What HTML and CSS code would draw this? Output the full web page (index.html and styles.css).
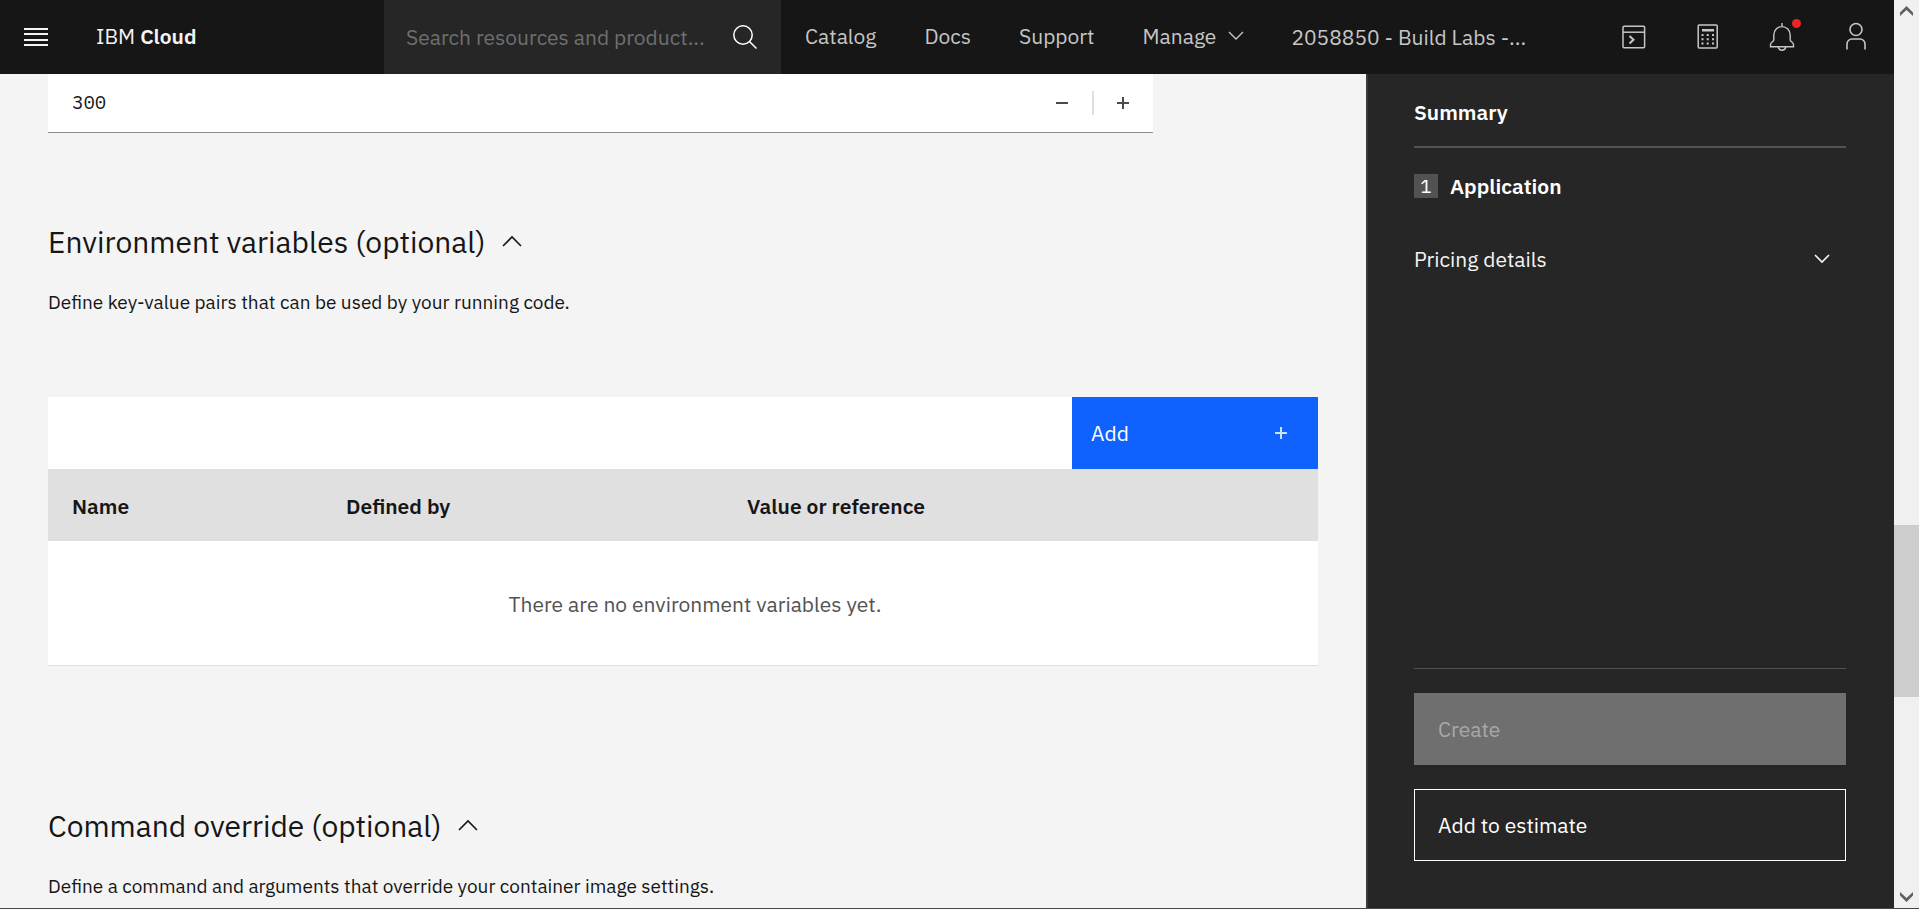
FILE: index.html
```html
<!DOCTYPE html>
<html lang="en">
<head>
<meta charset="utf-8">
<title>IBM Cloud</title>
<link rel="stylesheet" href="styles.css">
</head>
<body>
<div class="app">
  <header class="header">
    <div class="brand-area">
      <button class="menu-button" type="button" aria-label="Menu">
        <svg width="24" height="18" viewBox="0 0 24 18" fill="#f4f4f4" shape-rendering="crispEdges"><path d="M0 0h24v2H0zM0 5h24v2H0zM0 11h24v2H0zM0 16h24v2H0z"/></svg>
      </button>
      <a class="brand" href="#">IBM <b>Cloud</b></a>
    </div>
    <form class="search">
      <input class="search-input" type="text" aria-label="Search" placeholder="Search resources and product...">
      <button class="search-button" type="button" aria-label="Submit search">
        <svg width="24" height="24" viewBox="0 0 24 24" fill="none" stroke="#fff" stroke-width="1.5"><circle cx="10" cy="10" r="9.2"/><path d="M16.5 16.5 23.5 23.5"/></svg>
      </button>
    </form>
    <nav class="nav">
      <a href="#">Catalog</a>
      <a href="#">Docs</a>
      <a href="#">Support</a>
      <a class="manage" href="#">Manage
        <svg width="16" height="10" viewBox="0 0 16 10" fill="none" stroke="#c6c6c6" stroke-width="1.4"><path d="M1 1l7 7 7-7"/></svg>
      </a>
    </nav>
    <button class="account" type="button">2058850 - Build Labs -...</button>
    <div class="tools">
      <button type="button" aria-label="Shell">
        <svg width="30" height="30" viewBox="0 0 30 30" fill="none" stroke="#c6c6c6" stroke-width="1.5"><rect x="4" y="4.2" width="21.6" height="21.6" rx="1"/><path d="M4 10.2h21.6"/><path d="M10.5 14l4 3.7-4 3.7" stroke-width="2"/></svg>
      </button>
      <button type="button" aria-label="Cost estimator">
        <svg width="30" height="30" viewBox="0 0 30 30" fill="#c6c6c6"><rect x="5.2" y="3" width="19" height="23" rx="1" fill="none" stroke="#c6c6c6" stroke-width="1.5"/><path d="M9 7h12v2.4H9zM8.5 12h2v2h-2zM13.7 12h2v2h-2zM19 12h2v2h-2zM8.5 16.2h2v2h-2zM13.7 16.2h2v2h-2zM19 16.2h2v2h-2zM8.5 20.4h2v2h-2zM13.7 20.4h2v2h-2zM19 20.4h2v2h-2z"/></svg>
      </button>
      <button type="button" aria-label="Notifications">
        <svg width="30" height="30" viewBox="0 0 30 30" fill="none" stroke="#c6c6c6" stroke-width="1.4"><path d="M15 1v3.5M6.8 13a8.2 8.4 0 0 1 16.4 0v5c0 1.6 3.3 2.2 3.3 4.5v2.2h-23v-2.2C3.5 20.2 6.8 19.6 6.8 18z"/><path d="M11.2 25c.4 2 1.9 3.2 3.8 3.2s3.400-1.200 3.800-3.200"/><circle cx="29.500" cy="1.500" r="4.500" fill="#ee2328" stroke="none"/></svg>
      </button>
      <button type="button" aria-label="Profile">
        <svg width="30" height="30" viewBox="0 0 30 30" fill="none" stroke="#c6c6c6" stroke-width="1.6"><circle cx="15" cy="7.500" r="6"/><path d="M6 27.500V22a5 5 0 0 1 5-5h8a5 5 0 0 1 5 5v5.500"/></svg>
      </button>
    </div>
  </header>

  <main class="main">
    <div class="number-field">
      <input class="number-input" type="text" value="300" aria-label="Timeout (seconds)">
      <button type="button" aria-label="Decrease">
        <svg width="12" height="12" viewBox="0 0 12 12" fill="#4a4a4a"><path d="M0 5h12v2H0z"/></svg>
      </button>
      <span class="divider"></span>
      <button type="button" aria-label="Increase">
        <svg width="12" height="12" viewBox="0 0 12 12" fill="#4a4a4a"><path d="M0 5h12v2H0zM5 0h2v12H5z"/></svg>
      </button>
    </div>

    <section class="section">
      <h2><button class="section-toggle" type="button" aria-expanded="true">Environment variables (optional)
        <svg width="20" height="12" viewBox="0 0 20 12" fill="none" stroke="#161616" stroke-width="1.6"><path d="M1 10l9-9 9 9"/></svg>
      </button></h2>
      <p>Define key-value pairs that can be used by your running code.</p>
    </section>

    <div class="data">
      <div class="toolbar">
        <button class="add-button" type="button"><span>Add</span>
          <svg width="12" height="12" viewBox="0 0 12 12" fill="#cfe0ff"><path d="M0 5h12v2H0zM5 0h2v12H5z"/></svg>
        </button>
      </div>
      <table class="table">
        <thead>
          <tr><th class="col-name">Name</th><th class="col-defined">Defined by</th><th>Value or reference</th></tr>
        </thead>
        <tbody>
          <tr><td colspan="3">There are no environment variables yet.</td></tr>
        </tbody>
      </table>
    </div>

    <section class="section section-command">
      <h2><button class="section-toggle" type="button" aria-expanded="true">Command override (optional)
        <svg width="20" height="12" viewBox="0 0 20 12" fill="none" stroke="#161616" stroke-width="1.6"><path d="M1 10l9-9 9 9"/></svg>
      </button></h2>
      <p>Define a command and arguments that override your container image settings.</p>
    </section>
  </main>

  <aside class="summary">
    <h3 class="summary-title">Summary</h3>
    <div class="summary-item"><span class="count">1</span><b>Application</b></div>
    <button class="pricing" type="button" aria-expanded="false">Pricing details
      <svg width="16" height="10" viewBox="0 0 16 10" fill="none" stroke="#f4f4f4" stroke-width="1.7"><path d="M1 1l7 7 7-7"/></svg>
    </button>
    <div class="actions">
      <button class="create" type="button" disabled>Create</button>
      <button class="estimate" type="button">Add to estimate</button>
    </div>
  </aside>

  <div class="scrollbar" aria-hidden="true">
    <svg class="scroll-arrow" width="13" height="10" viewBox="0 0 13 10" fill="#606060"><path d="M6.500 0 13 6.500V10L6.500 4 0 10V6.500z"/></svg>
    <div class="track"><div class="thumb"></div></div>
    <svg class="scroll-arrow" width="13" height="10" viewBox="0 0 13 10" fill="#606060"><path d="M6.500 10 0 3.500V0l6.500 6L13 0v3.500z"/></svg>
  </div>
</div>
</body>
</html>
```

FILE: styles.css
```css
* { box-sizing: border-box; }

body {
  margin: 0;
  font-family: "IBM Plex Sans", Roboto, sans-serif;
  font-size: 21px;
  line-height: 28px;
  color: #161616;
}

h2, h3, p { margin: 0; font-weight: 400; }

button, input {
  font: inherit;
  color: inherit;
  background: none;
  border: 0;
  border-radius: 0;
  padding: 0;
  margin: 0;
}

a { color: inherit; text-decoration: none; }
svg { display: block; flex: none; overflow: visible; }

.app {
  height: 100vh;
  display: grid;
  grid-template-columns: minmax(0, 1fr) 528px 25px;
  grid-template-rows: 74px minmax(0, 1fr);
  border-bottom: 1px solid #464646;
  overflow: hidden;
}

/* Header */
.header {
  grid-column: 1 / 3;
  display: flex;
  align-items: stretch;
  background: #161616;
  color: #c6c6c6;
}

.brand-area { width: 384px; display: flex; align-items: center; color: #f4f4f4; }
.menu-button { width: 72px; height: 74px; display: flex; align-items: center; justify-content: center; }
.brand { padding: 0 0 2px 24px; }
.brand b { font-weight: 600; }

.search {
  width: 397px;
  display: flex;
  align-items: center;
  gap: 24px;
  padding: 0 24px 0 22px;
  background: #262626;
}
.search-input { flex: 1; min-width: 0; }
.search-input::placeholder { color: #6f6f6f; opacity: 1; }

.nav { display: flex; align-items: center; gap: 48px; padding: 0 0 2px 24px; }
.manage { display: flex; align-items: center; gap: 12px; }

.account { margin-left: 47px; white-space: nowrap; }

.tools { display: flex; margin-left: auto; padding-right: 1px; }
.tools button { width: 74px; display: flex; align-items: center; justify-content: center; }

/* Main column */
.main { background: #f4f4f4; padding: 0 48px; overflow: hidden; }

.number-field {
  width: 87%;
  height: 59px;
  display: flex;
  align-items: center;
  background: #fff;
  border-bottom: 1px solid #8d8d8d;
}
.number-input {
  flex: 1;
  min-width: 0;
  padding: 0 0 2px 24px;
  font-family: "IBM Plex Mono", "Liberation Mono", monospace;
  font-size: 19px;
}
.number-field button { width: 59px; height: 58px; display: flex; align-items: center; justify-content: center; }
.divider { width: 2px; height: 24px; background: #e0e0e0; }

.section { padding-top: 89px; }
.section h2 { font-size: 30px; line-height: 40px; }
.section-toggle { display: flex; align-items: center; gap: 16px; }
.section p { padding-top: 26px; font-size: 19px; line-height: 28px; }

.data { margin-top: 81px; border-bottom: 1px solid #e0e0e0; background: #fff; }
.toolbar { display: flex; justify-content: flex-end; }
.add-button {
  width: 246px;
  height: 72px;
  display: flex;
  align-items: center;
  justify-content: space-between;
  padding: 0 31px 0 19px;
  background: #0f62fe;
  color: #fff;
}

.table { width: 100%; border-collapse: collapse; table-layout: fixed; }
.table th { height: 72px; padding: 2px 24px 0; text-align: left; font-weight: 600; background: #e0e0e0; }
.col-name { width: 274px; }
.col-defined { width: 401px; }
.table td { height: 124px; padding: 2px 0 0 24px; text-align: center; color: #525252; }

.section-command { padding-top: 140px; }

/* Summary panel */
.summary {
  display: flex;
  flex-direction: column;
  padding: 24px 48px 47px 46px;
  background: #262626;
  border-left: 2px solid #393939;
  color: #f4f4f4;
}
.summary-title { padding-bottom: 20px; border-bottom: 2px solid #525252; font-size: 21px; font-weight: 600; color: #fff; }
.summary-item { display: flex; align-items: center; gap: 12px; padding-top: 24px; color: #fff; }
.summary-item b { font-weight: 600; }
.count { width: 24px; line-height: 24px; background: #525252; text-align: center; font-size: 19px; }
.pricing { display: flex; align-items: center; justify-content: space-between; margin-top: 45px; padding-right: 16px; }
.actions { display: grid; gap: 24px; margin-top: auto; padding-top: 24px; border-top: 1px solid #525252; }
.actions button { height: 72px; padding: 0 24px; text-align: left; }
.create { background: #6f6f6f; color: #a8a8a8; }
.actions .estimate { border: 1px solid #fff; padding: 0 23px; color: #fff; }

/* Scrollbar */
.scrollbar {
  grid-column: 3;
  grid-row: 1 / 3;
  display: flex;
  flex-direction: column;
  align-items: center;
  padding: 6px 0;
  background: #f0f0f0;
}
.track { flex: 1; width: 100%; margin: 10px 0 6px; display: flex; flex-direction: column; }
.thumb { height: 20%; background: #cdcdcd; }
.track::before { content: ""; height: 58%; }
```
